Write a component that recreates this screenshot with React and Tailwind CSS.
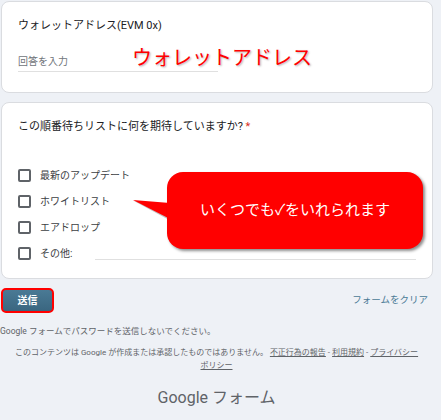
import React from 'react';

const options = ['最新のアップデート', 'ホワイトリスト', 'エアドロップ'];

const Checkbox = () => (
    <div className="w-[13px] h-[13px] border-2 border-[#5f6368] rounded-[2px] shrink-0" />
);

const App = () => {
    return (
        <div className="w-[441px] h-[420px] bg-[#eef1f6] overflow-hidden font-['Roboto','Noto_Sans_CJK_JP',sans-serif]">
            <div className="w-[433px] pt-[1px]">
                {/* Wallet address card */}
                <div className="relative ml-[1px] h-[92px] bg-white border border-[#dadce0] rounded-[8px] px-4 pt-[17px]">
                    <div className="text-[11px] leading-[14px] text-[#202124]">ウォレットアドレス(EVM 0x)</div>
                    <div className="mt-[20px] w-[200px] h-[19px] leading-[18px] text-[10px] text-[#70757a] border-b border-[#e0e0e0]">
                        回答を入力
                    </div>
                    <div className="absolute left-[130px] top-[42px] text-[20px] leading-[28px] text-[#ff0000] [text-shadow:1px_1px_2px_rgba(0,0,0,0.3)]">
                        ウォレットアドレス
                    </div>
                </div>

                {/* Expectation card */}
                <div className="relative ml-[1px] mt-[9px] h-[177px] bg-white border border-[#dadce0] rounded-[8px] px-4 pt-[17px]">
                    <div className="text-[11px] leading-[14px] text-[#202124]">
                        この順番待ちリストに何を期待していますか? <span className="text-[#d93025]">*</span>
                    </div>
                    <div className="mt-[28px] flex flex-col">
                        {options.map(o => (
                            <div key={o} className="h-[26px] flex items-center gap-[9px]">
                                <Checkbox />
                                <span className="text-[10px] text-[#3c4043]">{o}</span>
                            </div>
                        ))}
                        <div className="h-[26px] flex items-center gap-[9px]">
                            <Checkbox />
                            <span className="text-[10px] text-[#3c4043]">その他:</span>
                            <div className="flex-1 self-end mb-[6px] ml-[14px] border-b border-[#e0e0e0]" />
                        </div>
                    </div>

                    {/* Callout */}
                    <svg className="absolute left-[129px] top-[94px]" width="42" height="26" viewBox="0 0 42 26">
                        <polygon points="3,4 40,7 40,24" fill="#7a7a7a" opacity="0.45" />
                        <polygon points="2,3 39,6 39,22" fill="#ff0000" />
                    </svg>
                    <div className="absolute left-[165px] top-[69px] w-[256px] h-[77px] rounded-[16px] bg-[#ff0000] shadow-[2px_2px_3px_rgba(0,0,0,0.45)] flex items-center justify-center">
                        <span className="text-[15px] text-white">いくつでも✓をいれられます</span>
                    </div>
                </div>

                {/* Submit row */}
                <div className="mt-[9px] flex items-center justify-between">
                    <button className="ml-[1px] w-[53px] h-[25px] rounded-[5px] border-2 border-[#ff0000] bg-gradient-to-b from-[#4a7a95] to-[#3a6680] text-white text-[10px] font-bold">
                        送信
                    </button>
                    <span className="mr-[5px] text-[9.5px] text-[#4a7a95]">フォームをクリア</span>
                </div>

                <div className="mt-[12px] text-[8.5px] leading-[12px] text-[#5f6368]">
                    Google フォームでパスワードを送信しないでください。
                </div>

                <div className="mt-[9px] text-center text-[8px] leading-[13px] text-[#5f6368]">
                    このコンテンツは Google が作成または承認したものではありません。 <span className="underline">不正行為の報告</span> - <span className="underline">利用規約</span> - <span className="underline">プライバシー</span>
                    <br />
                    <span className="underline">ポリシー</span>
                </div>

                <div className="mt-[15px] text-center text-[16px] leading-[22px] text-[#5f6368]">
                    Google フォーム
                </div>
            </div>
        </div>
    );
};

export default App;
